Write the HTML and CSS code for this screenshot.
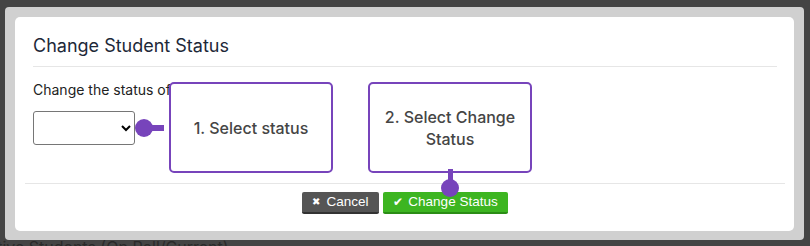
FILE: index.html
```html
<!DOCTYPE html>
<html>
  <head>
    <meta charset="utf-8">
    <title>Change Student Status</title>
    <link rel="stylesheet" href="styles.css">
  </head>
<body>
	<!-- page behind the overlay -->
	<div class="backdrop">
		<div class="under-text">Active Students (On Roll/Current)</div>
		<!-- modal frame -->
		<div class="frame">
			<div class="dialog">
				<div class="dialog-header">
					<h4 class="dialog-title">Change Student Status</h4>
				</div>
				<div class="dialog-body">
					<label for="status" class="status-label">Change the status of</label>
					<select id="status" class="status-select">
						<option></option>
					</select>
				</div>
				<div class="dialog-footer">
					<button class="btn btn-cancel"><span class="btn-icon">&#x2716;</span>Cancel</button>
					<button class="btn btn-ok"><span class="btn-icon btn-check">&#x2714;</span>Change Status</button>
				</div>
				<!-- step callouts -->
				<div class="callout callout-one">
					<span class="pin pin-left"></span>
					1. Select status
				</div>
				<div class="callout callout-two">
					<span class="pin pin-down"></span>
					2. Select Change<br>Status
				</div>
			</div>
		</div>
	</div>
</body>
</html>
```

FILE: styles.css
```css
html, body {
	margin: 0;
	padding: 0;
}
body {
	width: 810px;
	height: 246px;
	overflow: hidden;
	background: #444;
	font-family: Inter, "Liberation Sans", sans-serif;
}
.backdrop {
	position: relative;
	height: 246px;
	padding: 7px 6px 6px 5px;
	box-sizing: border-box;
}
.under-text {
	position: absolute;
	left: -23px;
	top: 238px;
	font-size: 16px;
	line-height: 18px;
	color: #2a2a2a;
	white-space: nowrap;
}
.frame {
	position: relative;
	height: 100%;
	box-sizing: border-box;
	padding: 10px 10px 9px 10px;
	background: #d0d0d0;
	border-radius: 4px;
}
.dialog {
	position: relative;
	height: 100%;
	box-sizing: border-box;
	background: #fff;
	border-radius: 5px;
}
.dialog-header {
	margin: 0 17px 0 18px;
	padding: 17px 0 8px;
	border-bottom: 1px solid #e6e6e6;
}
.dialog-title {
	margin: 0;
	font-size: 18px;
	line-height: 24px;
	font-weight: 400;
	color: #1d2838;
}
.dialog-body {
	height: 116px;
	padding: 0 18px;
	box-sizing: border-box;
}
.status-label {
	display: block;
	padding-top: 13px;
	font-size: 14px;
	line-height: 20px;
	color: #222;
}
.status-select {
	display: block;
	margin-top: 11px;
	width: 102px;
	height: 34px;
	border: 1px solid #767676;
	border-radius: 3px;
	background: #fff;
}
.dialog-footer {
	margin: 0 9px 0 10px;
	padding-top: 8px;
	border-top: 1px solid #e6e6e6;
	display: flex;
	justify-content: center;
	gap: 4px;
}
.btn {
	height: 22px;
	padding: 0 8px;
	border: none;
	border-radius: 2px;
	color: #fff;
	font-family: "Liberation Sans", Arial, sans-serif;
	font-size: 13.5px;
	line-height: 20px;
	white-space: nowrap;
	display: flex;
	align-items: center;
	justify-content: center;
	cursor: pointer;
}
.btn-icon {
	font-size: 10px;
	margin-right: 6px;
}
.btn-check {
	font-size: 12px;
	margin-right: 5px;
}
.btn-cancel {
	width: 77px;
	background: #555;
	border-bottom: 2px solid #333;
}
.btn-ok {
	width: 125px;
	background: #3db521;
	border-bottom: 2px solid #2b8d16;
}
.callout {
	position: absolute;
	top: 65px;
	width: 164px;
	height: 91px;
	box-sizing: border-box;
	border: 2px solid #7744bb;
	border-radius: 5px;
	background: #fff;
	display: flex;
	align-items: center;
	justify-content: center;
	text-align: center;
	font-size: 16px;
	line-height: 22px;
	font-weight: 500;
	color: #454545;
}
.callout-one {
	left: 154px;
}
.callout-two {
	left: 353px;
}
.pin {
	position: absolute;
	width: 18px;
	height: 18px;
	border-radius: 50%;
	background: #7744bb;
}
.pin-left {
	left: -36px;
	top: 35px;
}
.pin-left::after {
	content: "";
	position: absolute;
	left: 9px;
	top: 6px;
	width: 20px;
	height: 6px;
	background: #7744bb;
}
.pin-down {
	left: 71px;
	bottom: -26px;
}
.pin-down::after {
	content: "";
	position: absolute;
	left: 7px;
	top: -10px;
	width: 5px;
	height: 14px;
	background: #7744bb;
}
```
